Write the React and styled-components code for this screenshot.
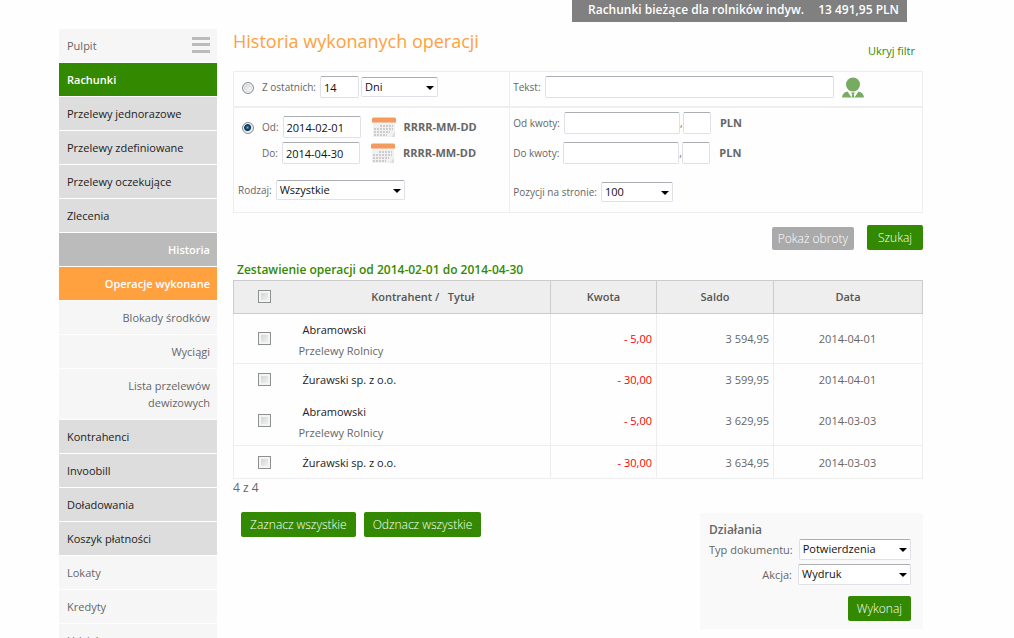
import React, { useState } from "react";
import styled, { createGlobalStyle, css } from "styled-components";

const GlobalStyle = createGlobalStyle`
  * {
    box-sizing: border-box;
  }
  body {
    margin: 0;
    background: #fefefe;
    color: #666;
    font-family: "Open Sans", "Liberation Sans", sans-serif;
    font-size: 11px;
  }
  input, select, button {
    font-family: inherit;
  }
`;

const Page = styled.div`
  height: 100vh;
  overflow: hidden;
  display: flex;
  gap: 16px;
  padding: 0 91px 0 59px;
`;

/* ---- sidebar ---- */
const Sidebar = styled.nav`
  flex: none;
  width: 158px;
  padding-top: 29px;
  display: flex;
  flex-direction: column;
  gap: 1px;
`;
const tones = {
  light: css`
    background: #f6f6f6;
    color: #666;
  `,
  grey: css`
    background: #ddd;
    color: #222;
  `,
  green: css`
    background: #338a00;
    color: #fff;
    font-weight: 600;
  `,
  dark: css`
    background: #bbb;
    color: #fff;
    font-weight: 600;
  `,
  orange: css`
    background: #ffa13f;
    color: #fff;
    font-weight: 600;
  `,
};
const NavItem = styled.a`
  display: flex;
  flex: none;
  align-items: center;
  justify-content: ${({ $sub }) => ($sub ? "flex-end" : "space-between")};
  text-align: ${({ $sub }) => ($sub ? "right" : "left")};
  padding: 8px 7px 8px 8px;
  min-height: 33px;
  line-height: 17px;
  text-decoration: none;
  ${({ $tone }) => tones[$tone]}
`;
const NavText = styled.span`
  max-width: ${({ $wrap }) => ($wrap ? "100px" : "none")};
`;

/* ---- content ---- */
const Content = styled.main`
  flex: 1;
  min-width: 0;
`;
const Account = styled.div`
  display: flex;
  justify-content: space-between;
  width: 335px;
  height: 22px;
  margin: 0 16px 0 auto;
  padding: 0 8px 0 16px;
  background: #808080;
  color: #fff;
  font-size: 12px;
  font-weight: 600;
  line-height: 20px;
`;
const Heading = styled.div`
  display: flex;
  justify-content: space-between;
  height: 49px;
  padding: 5px 8px 0 0;
`;
const Title = styled.h1`
  margin: 0;
  color: #ffa13f;
  font-size: 18px;
  font-weight: 400;
  line-height: 28px;
`;
const FilterLink = styled.a`
  margin-top: 15px;
  color: #338a00;
  line-height: 18px;
  text-decoration: none;
`;

const Filters = styled.form`
  display: grid;
  grid-template-columns: 2fr 3fr;
  border: 1px solid #eee;
`;
const Cell = styled.div`
  display: flex;
  flex-direction: column;
  min-height: ${({ $tall }) => ($tall ? "106px" : "34px")};
  padding: 4px ${({ $right }) => ($right ? 3 : 4)}px;
  border-top: ${({ $tall }) => ($tall ? "2px solid #eee" : "none")};
  border-left: ${({ $right }) => ($right ? "1px solid #eee" : "none")};
`;
const Field = styled.div`
  display: flex;
  align-items: center;
  height: 22px;
  margin-top: ${({ $top }) => $top || 0}px;
  padding-left: ${({ $indent }) => $indent || 0}px;
`;
const Label = styled.label`
  margin-right: 4px;
  color: #666;
  font-size: 10px;
  white-space: nowrap;
`;
const boxed = css`
  border: 1px solid #dfe0e8;
  border-top-color: #abadb3;
  border-radius: 2px;
  background: #fff;
  color: #111;
  font-size: 11px;
`;
const TextBox = styled.input`
  width: ${({ $w }) => $w}px;
  height: 22px;
  padding: 0 3px;
  ${boxed}
`;
const SelectWrap = styled.span`
  position: relative;
  display: inline-flex;
  width: ${({ $w }) => $w}px;
  &::after {
    content: "";
    position: absolute;
    right: 4px;
    top: 9px;
    border: 4px solid transparent;
    border-top-color: #000;
    border-bottom: 0;
    pointer-events: none;
  }
`;
const SelectBox = styled.select`
  appearance: none;
  width: 100%;
  height: ${({ $h }) => $h || 20}px;
  padding: 0 12px 2px 3px;
  ${boxed}
`;
const Radio = styled.input`
  appearance: none;
  flex: none;
  width: 12px;
  height: 12px;
  margin: 2px 8px 0 4px;
  border: 1px solid #8a8d90;
  border-radius: 50%;
  background: radial-gradient(circle at 60% 60%, #f4f4f4, #c4c8cc);
  box-shadow: inset 0 0 0 1px #f4f4f4;
  &:checked {
    background: radial-gradient(circle at 45% 45%, #4db8e8 0, #0c4a78 2px, #0b2f50 3px, #dfe3e6 4px);
  }
`;
const IconButton = styled.button`
  display: flex;
  margin: 0 8px 0 ${({ $left }) => $left}px;
  padding: 0;
  border: 0;
  background: none;
`;
const Strong = styled.b`
  color: #666;
  font-weight: 700;
  margin-left: ${({ $left }) => $left || 0}px;
  padding-bottom: 2px;
`;
const Comma = styled.span`
  width: 3px;
  font-size: 10px;
`;

const Button = styled.button`
  min-width: 56px;
  height: ${({ $muted }) => ($muted ? 23 : 25)}px;
  padding: 0 ${({ $muted }) => ($muted ? 6 : 9)}px;
  border: 0;
  border-radius: 2px;
  background: ${({ $muted }) => ($muted ? "#aaa" : "#338a00")};
  color: #fff;
  font-size: 12px;
  font-weight: 300;
  white-space: nowrap;
`;
const SearchRow = styled.div`
  display: flex;
  justify-content: flex-end;
  align-items: flex-end;
  gap: 13px;
  margin-top: 12px;
`;

/* ---- operations ---- */
const Subtitle = styled.h2`
  margin: 10px 0 1px 4px;
  color: #338a00;
  font-size: 12px;
  font-weight: 600;
  line-height: 19px;
`;
const Table = styled.table`
  width: 100%;
  table-layout: fixed;
  border-collapse: collapse;
`;
const Th = styled.th`
  height: 33px;
  padding: 0 0 2px;
  border: solid #ccc;
  border-width: 1px ${({ $open }) => ($open ? 0 : 1)}px 1px 0;
  background: #eee;
  color: #555;
  font-weight: 600;
  &:first-child {
    border-left-width: 1px;
  }
`;
const Row = styled.tr`
  height: ${({ $h }) => $h}px;
  border-bottom: ${({ $line }) => ($line ? "1px solid #eee" : "none")};
`;
const Td = styled.td`
  padding: 0 4px 0 3px;
  border: solid #eee;
  border-width: 0 ${({ $open }) => ($open ? 0 : 1)}px 0 0;
  color: ${({ $red }) => ($red ? "#f00" : "#666")};
  text-align: ${({ $align }) => $align || "left"};
  &:first-child {
    border-left-width: 1px;
  }
`;
const Name = styled.div`
  padding-left: 4px;
  color: #222;
  line-height: 21px;
  &:not(:last-child) {
    padding-top: 3px;
  }
`;
const Desc = styled.div`
  line-height: 21px;
`;
const Check = styled.input`
  appearance: none;
  display: block;
  width: 13px;
  height: 13px;
  margin: 0 auto;
  border: 1px solid #8e8f8f;
  background: linear-gradient(135deg, #cbcfd5, #f6f6f6);
  box-shadow: inset 0 0 0 2px #f4f4f4;
  &:checked {
    background: #338a00;
  }
`;
const Count = styled.div`
  font-size: 12px;
  line-height: 18px;
`;
const Footer = styled.div`
  display: flex;
  justify-content: space-between;
  align-items: flex-start;
  margin-top: 15px;
`;
const MarkButtons = styled.div`
  display: flex;
  gap: 8px;
  padding-left: 8px;
`;
const Actions = styled.section`
  width: 223px;
  margin-top: 1px;
  padding: 9px 12px 8px 9px;
  background: #f9f9f9;
`;
const ActionsTitle = styled.h3`
  margin: 0;
  color: #666;
  font-size: 12px;
  font-weight: 600;
  line-height: 15px;
`;
const ActionRow = styled.div`
  display: flex;
  justify-content: flex-end;
  align-items: center;
  height: 25px;
`;
const ActionLabel = styled.label`
  margin-right: 6px;
  white-space: nowrap;
`;
const Submit = styled.div`
  display: flex;
  justify-content: flex-end;
  margin-top: 9px;
`;

const menu = [
  { text: "Rachunki", tone: "green" },
  { text: "Przelewy jednorazowe", tone: "grey" },
  { text: "Przelewy zdefiniowane", tone: "grey" },
  { text: "Przelewy oczekujące", tone: "grey" },
  { text: "Zlecenia", tone: "grey" },
  { text: "Historia", tone: "dark", sub: true },
  { text: "Operacje wykonane", tone: "orange", sub: true },
  { text: "Blokady środków", tone: "light", sub: true },
  { text: "Wyciągi", tone: "light", sub: true },
  { text: "Lista przelewów dewizowych", tone: "light", sub: true, wrap: true },
  { text: "Kontrahenci", tone: "grey" },
  { text: "Invoobill", tone: "grey" },
  { text: "Doładowania", tone: "grey" },
  { text: "Koszyk płatności", tone: "grey" },
  { text: "Lokaty", tone: "light" },
  { text: "Kredyty", tone: "light" },
  { text: "Udziały", tone: "light" },
];

const operations = [
  { id: 1, name: "Abramowski", desc: "Przelewy Rolnicy", amount: "- 5,00", balance: "3 594,95", date: "2014-04-01", line: true },
  { id: 2, name: "Żurawski sp. z o.o.", amount: "- 30,00", balance: "3 599,95", date: "2014-04-01" },
  { id: 3, name: "Abramowski", desc: "Przelewy Rolnicy", amount: "- 5,00", balance: "3 629,95", date: "2014-03-03", line: true },
  { id: 4, name: "Żurawski sp. z o.o.", amount: "- 30,00", balance: "3 634,95", date: "2014-03-03", line: true },
];

const MenuIcon = () => (
  <svg width="18" height="17" viewBox="0 0 18 17" fill="#bbb">
    <path d="M0 0h18v3H0zM0 6h18v3H0zM0 13h18v3H0z" />
  </svg>
);

const CalendarIcon = () => (
  <svg width="24" height="21" viewBox="0 0 24 21">
    <path d="M1 5h22v11l-4 4H1z" fill="#f1f1f1" />
    <path d="M23 15l-4 5 4 0z" fill="#ddd" />
    <path d="M0 2Q0 0.500 1.500 0.500h21q1.500 0 1.500 1.500V5.500H0z" fill="#f49a5c" />
    <path d="M8 9h13M2 12h19M2 15h16M2 18h13" stroke="#ccc" strokeWidth="2" strokeDasharray="2 1" />
  </svg>
);

const PersonIcon = () => (
  <svg width="22" height="21" viewBox="0 0 22 21" fill="#76ab61">
    <circle cx="11" cy="7.500" r="7" />
    <path d="M0 20.500c.4-3 2-5.500 5.500-6l4 6zM22 20.500c-.4-3-2-5.500-5.500-6l-4 6zM9 15.500h4l-1.200 2 .7 3h-3l.7-3z" />
  </svg>
);

const Dropdown = ({ id, width, height, options, label }) => (
  <SelectWrap $w={width}>
    <SelectBox id={id} $h={height} aria-label={label}>
      {options.map((o) => (
        <option key={o}>{o}</option>
      ))}
    </SelectBox>
  </SelectWrap>
);

const App = () => {
  const [selected, setSelected] = useState([]);
  const allIds = operations.map((o) => o.id);

  const toggle = (id) =>
    setSelected(selected.includes(id) ? selected.filter((s) => s !== id) : [...selected, id]);

  return (
    <Page>
      <GlobalStyle />
      <Sidebar>
        <NavItem href="#" $tone="light">
          <NavText>Pulpit</NavText>
          <MenuIcon />
        </NavItem>
        {menu.map((item) => (
          <NavItem href="#" key={item.text} $tone={item.tone} $sub={item.sub}>
            <NavText $wrap={item.wrap}>{item.text}</NavText>
          </NavItem>
        ))}
      </Sidebar>
      <Content>
        <Account>
          <span>Rachunki bieżące dla rolników indyw.</span>
          <span>13 491,95 PLN</span>
        </Account>
        <Heading>
          <Title>Historia wykonanych operacji</Title>
          <FilterLink href="#">Ukryj filtr</FilterLink>
        </Heading>

        <Filters onSubmit={(e) => e.preventDefault()}>
          <Cell>
            <Field>
              <Radio type="radio" name="range" id="range-last" />
              <Label htmlFor="range-last">Z ostatnich:</Label>
              <TextBox $w={39} defaultValue="14" aria-label="Liczba" />
              <Field $indent={2}>
                <Dropdown id="unit" label="Jednostka" width={77} options={["Dni", "Miesiące"]} />
              </Field>
            </Field>
          </Cell>
          <Cell $right>
            <Field>
              <Label htmlFor="text">Tekst:</Label>
              <TextBox $w={289} id="text" />
              <IconButton type="button" $left={8} aria-label="Kontrahenci">
                <PersonIcon />
              </IconButton>
            </Field>
          </Cell>
          <Cell $tall>
            <Field $top={4}>
              <Radio type="radio" name="range" id="range-dates" defaultChecked />
              <Label htmlFor="from">Od:</Label>
              <TextBox $w={78} id="from" defaultValue="2014-02-01" />
              <IconButton type="button" $left={11} aria-label="Kalendarz od">
                <CalendarIcon />
              </IconButton>
              <Strong>RRRR-MM-DD</Strong>
            </Field>
            <Field $indent={24} $top={4}>
              <Label htmlFor="to">Do:</Label>
              <TextBox $w={78} id="to" defaultValue="2014-04-30" />
              <IconButton type="button" $left={11} aria-label="Kalendarz do">
                <CalendarIcon />
              </IconButton>
              <Strong>RRRR-MM-DD</Strong>
            </Field>
            <Field $top={15}>
              <Label htmlFor="kind">Rodzaj:</Label>
              <Dropdown id="kind" width={129} options={["Wszystkie"]} />
            </Field>
          </Cell>
          <Cell $tall $right>
            <Field>
              <Label htmlFor="min">Od kwoty:</Label>
              <TextBox $w={116} id="min" />
              <Comma>,</Comma>
              <TextBox $w={28} aria-label="Od kwoty, grosze" />
              <Strong $left={9}>PLN</Strong>
            </Field>
            <Field $top={8}>
              <Label htmlFor="max">Do kwoty:</Label>
              <TextBox $w={116} id="max" />
              <Comma>,</Comma>
              <TextBox $w={28} aria-label="Do kwoty, grosze" />
              <Strong $left={9}>PLN</Strong>
            </Field>
            <Field $top={17}>
              <Label htmlFor="per-page">Pozycji na stronie:</Label>
              <Dropdown id="per-page" width={72} options={["100", "50"]} />
            </Field>
          </Cell>
        </Filters>
        <SearchRow>
          <Button $muted>Pokaż obroty</Button>
          <Button>Szukaj</Button>
        </SearchRow>

        <Subtitle>Zestawienie operacji od 2014-02-01 do 2014-04-30</Subtitle>
        <Table>
          <colgroup>
            <col width="62" />
            <col />
            <col width="106" />
            <col width="117" />
            <col width="149" />
          </colgroup>
          <thead>
            <tr>
              <Th $open>
                <Check
                  type="checkbox"
                  aria-label="Wszystkie operacje"
                  checked={selected.length === allIds.length}
                  onChange={(e) => setSelected(e.target.checked ? allIds : [])}
                />
              </Th>
              <Th>Kontrahent / &nbsp; Tytuł</Th>
              <Th>Kwota</Th>
              <Th>Saldo</Th>
              <Th>Data</Th>
            </tr>
          </thead>
          <tbody>
            {operations.map((op) => (
              <Row key={op.id} $h={op.desc ? 50 : op.line ? 33 : 32} $line={op.line}>
                <Td $open>
                  <Check
                    type="checkbox"
                    aria-label={op.name}
                    checked={selected.includes(op.id)}
                    onChange={() => toggle(op.id)}
                  />
                </Td>
                <Td>
                  <Name>{op.name}</Name>
                  {op.desc && <Desc>{op.desc}</Desc>}
                </Td>
                <Td $align="right" $red>{op.amount}</Td>
                <Td $align="right">{op.balance}</Td>
                <Td $align="center">{op.date}</Td>
              </Row>
            ))}
          </tbody>
        </Table>
        <Count>4 z 4</Count>

        <Footer>
          <MarkButtons>
            <Button onClick={() => setSelected(allIds)}>Zaznacz wszystkie</Button>
            <Button onClick={() => setSelected([])}>Odznacz wszystkie</Button>
          </MarkButtons>
          <Actions>
            <ActionsTitle>Działania</ActionsTitle>
            <ActionRow>
              <ActionLabel htmlFor="doc-type">Typ dokumentu:</ActionLabel>
              <Dropdown id="doc-type" width={113} height={21} options={["Potwierdzenia"]} />
            </ActionRow>
            <ActionRow>
              <ActionLabel htmlFor="action">Akcja:</ActionLabel>
              <Dropdown id="action" width={113} height={21} options={["Wydruk"]} />
            </ActionRow>
            <Submit>
              <Button>Wykonaj</Button>
            </Submit>
          </Actions>
        </Footer>
      </Content>
    </Page>
  );
};

export default App;
